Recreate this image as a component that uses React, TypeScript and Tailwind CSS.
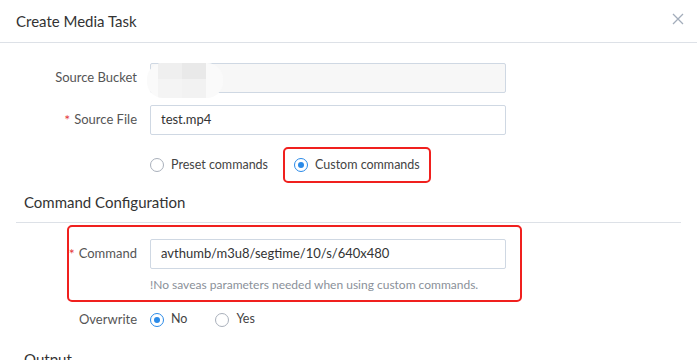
import React from 'react'

const font = { fontFamily: 'Lato, "Open Sans", "Noto Sans", sans-serif' }

function Radio({ checked, label }: { checked?: boolean; label: string }) {
  return (
    <div className="flex items-center gap-[7px] whitespace-nowrap">
      <span
        className={
          'flex h-[14px] w-[14px] items-center justify-center rounded-full border bg-white ' +
          (checked ? 'border-[#2a8ae8]' : 'border-[#a9b0bb]')
        }
      >
        {checked && <span className="h-[6px] w-[6px] rounded-full bg-[#2a8ae8]" />}
      </span>
      <span className="text-[12.5px] text-[#444]">{label}</span>
    </div>
  )
}

function Label({ text, required }: { text: string; required?: boolean }) {
  return (
    <div className="flex w-[150px] shrink-0 items-center justify-end whitespace-nowrap pr-[13px] text-[13px] text-[#555]">
      {required && <span className="mr-[4px] text-[14px] leading-none text-[#e4393c]">*</span>}
      {text}
    </div>
  )
}

export default function App() {
  return (
    <div className="relative h-[360px] w-[697px] overflow-hidden bg-white" style={font}>
      {/* Header */}
      <div className="flex h-[43px] items-center justify-between border-b border-[#dde1e7] pl-[16px] pr-[10px]">
        <span className="text-[15px] text-[#333]">Create Media Task</span>
        <svg width="12" height="12" viewBox="0 0 12 12" className="mr-[3px] mb-[5px]">
          <path d="M1 1L11 11M11 1L1 11" stroke="#a3adbb" strokeWidth="1.3" />
        </svg>
      </div>

      {/* Source Bucket */}
      <div className="mt-[20px] flex h-[30px]">
        <Label text="Source Bucket" />
        <div className="relative h-[30px] w-[356px] rounded-[2px] border border-[#cfd8e3] bg-[#f7f7f7]">
          <div className="absolute left-[-4px] top-[-1px] h-[35px] w-[76px] overflow-hidden rounded-[16px] bg-[#fafafa]">
            <div className="flex h-[16px]">
              <div className="ml-[11px] h-[16px] w-[24px] bg-[#efefef]" />
              <div className="h-[16px] w-[24px] bg-[#e9e9e9]" />
            </div>
            <div className="flex h-[19px]">
              <div className="ml-[11px] h-[19px] w-[24px] bg-[#f4f4f4]" />
              <div className="h-[19px] w-[24px] bg-[#f2f2f2]" />
            </div>
          </div>
        </div>
      </div>

      {/* Source File */}
      <div className="mt-[12px] flex h-[30px]">
        <Label text="Source File" required />
        <div className="flex h-[30px] w-[356px] items-center rounded-[2px] border border-[#cfd8e3] bg-white pl-[10px] text-[13px] text-[#333]">
          test.mp4
        </div>
      </div>

      {/* Command type */}
      <div className="mt-[12px] flex h-[36px] items-center pl-[150px]">
        <div className="w-[133px]">
          <Radio label="Preset commands" />
        </div>
        <div className="flex h-[36px] w-[148px] items-center rounded-[5px] border-2 border-[#f0201e] pl-[9px]">
          <Radio checked label="Custom commands" />
        </div>
      </div>

      {/* Section heading */}
      <div className="mx-[16px] mt-[8px] border-b border-[#dde1e7] pb-[8px] pl-[8px] text-[15px] text-[#333]">
        Command Configuration
      </div>

      {/* Command */}
      <div className="ml-[67px] mt-[2px] h-[77px] w-[455px] rounded-[5px] border-2 border-[#f0201e] pt-[12px]">
        <div className="-ml-[69px] flex h-[30px]">
          <Label text="Command" required />
          <div className="flex h-[30px] w-[356px] items-center rounded-[2px] border border-[#cfd8e3] bg-white pl-[10px] text-[13px] text-[#333]">
            avthumb/m3u8/segtime/10/s/640x480
          </div>
        </div>
        <div className="ml-[81px] mt-[7px] whitespace-nowrap text-[12px] text-[#8a9099]">
          !No saveas parameters needed when using custom commands.
        </div>
      </div>

      {/* Overwrite */}
      <div className="mt-[8px] flex h-[20px] items-center">
        <Label text="Overwrite" />
        <Radio checked label="No" />
        <div className="ml-[28px]">
          <Radio label="Yes" />
        </div>
      </div>

      {/* Output */}
      <div className="mt-[19px] pl-[24px] text-[15px] leading-[20px] text-[#333]">Output</div>
    </div>
  )
}
